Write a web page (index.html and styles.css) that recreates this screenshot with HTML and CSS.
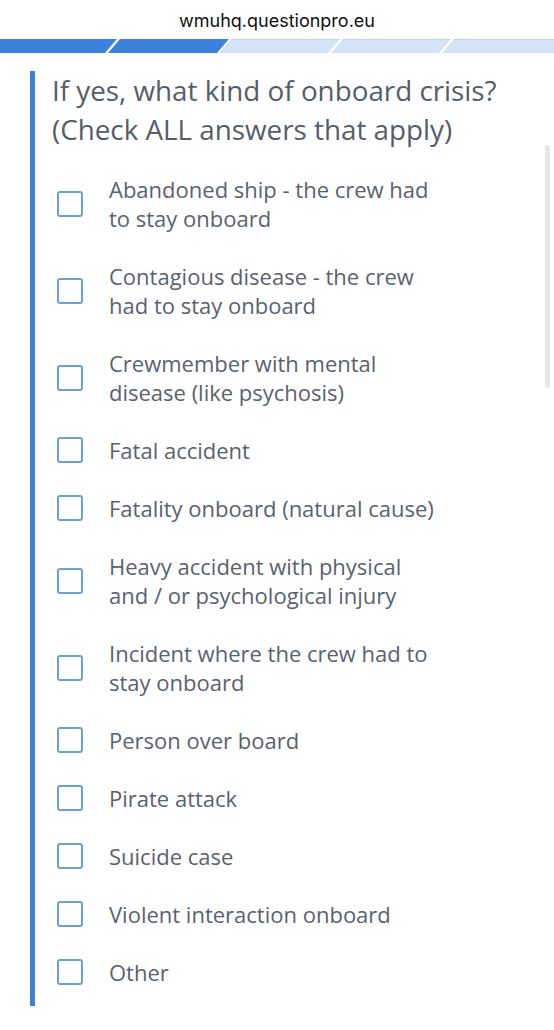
FILE: index.html
```html
<!DOCTYPE html>
<html lang="en">
<head>
<meta charset="utf-8">
<title>Survey</title>
<link rel="stylesheet" href="styles.css">
</head>
<body>
<header class="urlbar">wmuhq.questionpro.eu</header>
<div class="progress">
  <svg width="554" height="14" viewBox="0 0 554 14" xmlns="http://www.w3.org/2000/svg">
    <rect x="0" y="0" width="554" height="14" fill="#d3e4f8"/>
    <rect x="0" y="0" width="554" height="1" fill="#c9d3dd"/>
    <polygon points="0,0 232,0 220,14 0,14" fill="#3c82dd"/>
    <polygon points="117,0 120,0 108,14 105,14" fill="#ffffff"/>
    <polygon points="229,0 232,0 220,14 217,14" fill="#ffffff"/>
    <polygon points="340,0 343,0 331,14 328,14" fill="#ffffff"/>
    <polygon points="451,0 454,0 442,14 439,14" fill="#ffffff"/>
  </svg>
</div>
<main class="page">
  <section class="question">
    <h1 class="q-title">If yes, what kind of onboard crisis? (Check ALL answers that apply)</h1>
    <ul class="options">
      <li class="option"><span class="box"></span><span class="label">Abandoned ship - the crew had to stay onboard</span></li>
      <li class="option"><span class="box"></span><span class="label">Contagious disease - the crew had to stay onboard</span></li>
      <li class="option"><span class="box"></span><span class="label">Crewmember with mental disease (like psychosis)</span></li>
      <li class="option"><span class="box"></span><span class="label">Fatal accident</span></li>
      <li class="option"><span class="box"></span><span class="label">Fatality onboard (natural cause)</span></li>
      <li class="option"><span class="box"></span><span class="label">Heavy accident with physical and / or psychological injury</span></li>
      <li class="option"><span class="box"></span><span class="label">Incident where the crew had to stay onboard</span></li>
      <li class="option"><span class="box"></span><span class="label">Person over board</span></li>
      <li class="option"><span class="box"></span><span class="label">Pirate attack</span></li>
      <li class="option"><span class="box"></span><span class="label">Suicide case</span></li>
      <li class="option"><span class="box"></span><span class="label">Violent interaction onboard</span></li>
      <li class="option"><span class="box"></span><span class="label">Other</span></li>
    </ul>
  </section>
  <div class="scrollbar"></div>
</main>
</body>
</html>
```
FILE: styles.css
```css
html, body {
  margin: 0;
  padding: 0;
  background: #ffffff;
}
body {
  width: 554px;
  height: 1030px;
  overflow: hidden;
  font-family: "Open Sans", "Noto Sans", sans-serif;
}
.urlbar {
  height: 39px;
  display: flex;
  align-items: center;
  justify-content: center;
  font-family: Inter, "Liberation Sans", sans-serif;
  font-size: 18px;
  color: #111111;
  padding-top: 1px;
  box-sizing: border-box;
}
.progress {
  height: 14px;
  line-height: 0;
}
.progress svg {
  display: block;
}
.page {
  position: relative;
  padding: 20px 0 0 30px;
}
.question {
  border-left: 5px solid #3c80dc;
  padding: 0 0 5px 17px;
  width: 480px;
}
.q-title {
  margin: -2px 0 0 0;
  font-weight: 400;
  font-size: 27.8px;
  line-height: 39px;
  color: #555d69;
}
.options {
  list-style: none;
  margin: 11px 0 0 0;
  padding: 0;
}
.option {
  display: flex;
  align-items: center;
  padding: 14.5px 0;
}
.box {
  flex: none;
  width: 26px;
  height: 26px;
  box-sizing: border-box;
  border: 2px solid #6d9fd9;
  border-radius: 3px;
  margin-left: 5px;
  margin-right: 26px;
}
.label {
  width: 336px;
  font-size: 22px;
  line-height: 29px;
  color: #5a626e;
}
.scrollbar {
  position: absolute;
  top: 92px;
  right: 4px;
  width: 5px;
  height: 243px;
  border-radius: 3px;
  background: #e6e6e6;
}
```
